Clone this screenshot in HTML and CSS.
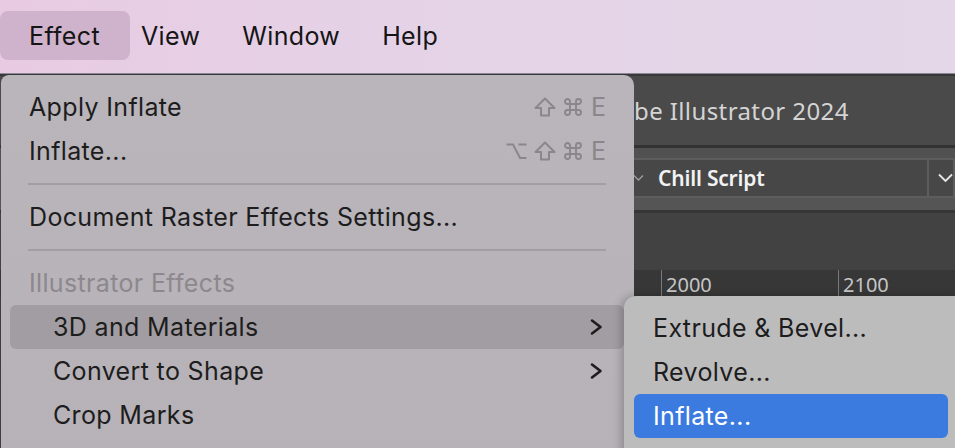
FILE: index.html
```html
<!DOCTYPE html>
<html lang="en">
<head>
<meta charset="utf-8">
<title>Effect menu</title>
<link rel="stylesheet" href="styles.css">
</head>
<body>
<div class="screen">
  <header class="menubar">
    <span class="mb-item active">Effect</span>
    <span class="mb-item">View</span>
    <span class="mb-item">Window</span>
    <span class="mb-item">Help</span>
  </header>

  <main class="app">
    <div class="titlebar"><span class="app-title">be Illustrator 2024</span></div>
    <div class="sep-dark"></div>
    <div class="band"></div>
    <div class="controlbar">
      <div class="font-field">
        <svg class="dd-small" width="11" height="8" viewBox="0 0 11 8"><polyline points="1,1.5 5.5,6 10,1.5" fill="none" stroke="#9c9c9c" stroke-width="1.4"/></svg>
        <span class="font-name">Chill Script</span>
      </div>
      <div class="style-field">
        <svg class="dd-big" width="15" height="10" viewBox="0 0 15 10"><polyline points="1,1.5 7.5,8 14,1.5" fill="none" stroke="#e6e6e6" stroke-width="1.8"/></svg>
      </div>
    </div>
    <div class="band2"></div>
    <div class="sep-dark2"></div>
    <div class="canvas-top"></div>
    <div class="ruler">
      <span class="tick"></span>
      <span class="tick"></span>
      <span class="tick"></span>
      <span class="tick">2000</span>
      <span class="tick">2100</span>
    </div>
    <div class="canvas"></div>
  </main>

  <div class="menu main-menu">
    <div class="mi">
      <span>Apply Inflate</span>
      <span class="keys">
        <svg width="22" height="20" viewBox="0 0 22 20"><polygon points="11,1.5 20.5,11 15,11 15,18.5 7,18.5 7,11 1.5,11" fill="none" stroke="#8a868b" stroke-width="2" stroke-linejoin="round"/></svg>
        <svg width="20" height="20" viewBox="0 0 20 20"><path d="M7 7V4.5A2.5 2.5 0 1 0 4.5 7H15.5A2.5 2.5 0 1 0 13 4.5V15.5A2.5 2.5 0 1 0 15.5 13H4.5A2.5 2.5 0 1 0 7 15.5Z" fill="none" stroke="#8a868b" stroke-width="1.9"/></svg>
        <span class="key-e">E</span>
      </span>
    </div>
    <div class="mi">
      <span>Inflate...</span>
      <span class="keys">
        <svg width="21" height="20" viewBox="0 0 21 20"><path d="M0.5 3.5H7L14 17H20.5M12.5 3.5H20.5" fill="none" stroke="#8a868b" stroke-width="2"/></svg>
        <svg width="22" height="20" viewBox="0 0 22 20"><polygon points="11,1.5 20.5,11 15,11 15,18.5 7,18.5 7,11 1.5,11" fill="none" stroke="#8a868b" stroke-width="2" stroke-linejoin="round"/></svg>
        <svg width="20" height="20" viewBox="0 0 20 20"><path d="M7 7V4.5A2.5 2.5 0 1 0 4.5 7H15.5A2.5 2.5 0 1 0 13 4.5V15.5A2.5 2.5 0 1 0 15.5 13H4.5A2.5 2.5 0 1 0 7 15.5Z" fill="none" stroke="#8a868b" stroke-width="1.9"/></svg>
        <span class="key-e">E</span>
      </span>
    </div>
    <div class="msep"></div>
    <div class="mi"><span>Document Raster Effects Settings...</span></div>
    <div class="msep"></div>
    <div class="mi disabled"><span>Illustrator Effects</span></div>
    <div class="mi indent hover">
      <span>3D and Materials</span>
      <svg class="chev" width="13" height="18" viewBox="0 0 13 18"><polyline points="2,2.5 10.5,9 2,15.5" fill="none" stroke="#1d1d1d" stroke-width="2.6" stroke-linecap="round" stroke-linejoin="round"/></svg>
    </div>
    <div class="mi indent">
      <span>Convert to Shape</span>
      <svg class="chev" width="13" height="18" viewBox="0 0 13 18"><polyline points="2,2.5 10.5,9 2,15.5" fill="none" stroke="#1d1d1d" stroke-width="2.6" stroke-linecap="round" stroke-linejoin="round"/></svg>
    </div>
    <div class="mi indent"><span>Crop Marks</span></div>
  </div>

  <div class="menu submenu">
    <div class="si"><span>Extrude &amp; Bevel...</span></div>
    <div class="si"><span>Revolve...</span></div>
    <div class="si sel"><span>Inflate...</span></div>
  </div>
</div>
</body>
</html>
```

FILE: styles.css
```css
* { box-sizing: border-box; margin: 0; padding: 0; }
html, body { width: 955px; height: 448px; overflow: hidden; }
body { font-family: Inter, "Noto Sans", sans-serif; background: #3c3c3c; }

.screen { position: relative; width: 955px; height: 448px; overflow: hidden; }

/* macOS menu bar */
.menubar {
  height: 74px;
  display: flex;
  align-items: center;
  padding-bottom: 2px;
  background: linear-gradient(90deg, #e8cbe3 0%, #e5d2e6 40%, #e3d7e8 100%);
  border-bottom: 1px solid #8c8996;
  font-size: 25px;
  letter-spacing: 0.35px;
  color: #151515;
}
.mb-item { height: 49px; display: flex; align-items: center; padding: 0 21px; }
.mb-item.active {
  background: #cfb2cb;
  border-radius: 8px;
  padding: 0 30px 0 29px;
  margin-right: -10px;
}

/* Illustrator window behind */
.app { display: flex; flex-direction: column; height: 374px; }
.titlebar {
  height: 71px;
  border-top: 2px solid #383838;
  background: #4a4a4a;
  display: flex;
  align-items: center;
  padding-left: 634px;
  color: #d4d4d4;
  font-family: "Noto Sans", sans-serif;
  font-size: 24px;
  letter-spacing: 0.4px;
}
.sep-dark { height: 3px; background: #333333; }
.band { height: 10px; background: #515151; }
.controlbar { height: 40px; display: flex; background: #515151; }
.font-field {
  width: 412px;
  margin-left: 520px;
  background: #474747;
  border: 2px solid #5d5d5d;
  display: flex;
  align-items: center;
  padding-left: 111px;
  gap: 14px;
}
.font-name {
  font-family: "Noto Sans", sans-serif;
  font-weight: 600;
  font-size: 21px;
  color: #f2f2f2;
  letter-spacing: -0.2px;
}
.style-field {
  flex: 1;
  background: #474747;
  border: 2px solid #5d5d5d;
  border-left: none;
  display: flex;
  align-items: center;
  padding-left: 9px;
}
.band2 { height: 12px; background: #555555; }
.sep-dark2 { height: 3px; background: #363636; }
.canvas-top { height: 57px; background: #424242; }
.ruler {
  height: 28px;
  background: #373737;
  display: flex;
  padding-left: 130px;
}
.tick {
  width: 177px;
  flex: none;
  border-left: 1px solid #7a7a7a;
  padding-left: 4px;
  font-family: "Noto Sans", sans-serif;
  font-size: 20px;
  line-height: 30px;
  color: #c6c6c6;
}
.canvas { flex: 1; background: #3d3d3d; }

/* Dropdown menus (overlays) */
.menu { position: absolute; font-size: 25px; letter-spacing: 0.35px; color: #1d1d1d; }
.main-menu {
  left: 1px;
  top: 75px;
  width: 633px;
  height: 380px;
  padding-top: 10px;
  background: linear-gradient(180deg, #b9b5ba 0%, #b6b2b7 100%);
  border-radius: 8px 10px 0 0;
}
.mi {
  height: 44px;
  margin: 0 10px 0 9px;
  padding: 0 18px 0 19px;
  display: flex;
  align-items: center;
  justify-content: space-between;
  border-radius: 6px;
}
.mi.indent { padding-left: 43px; }
.mi.disabled { color: #8c888d; }
.mi.hover { background: #a29da2; }
.chev { margin-right: 3px; }
.keys { display: flex; align-items: center; gap: 7px; color: #8a868b; letter-spacing: 0; }
.key-e { margin-left: 1px; }
.msep { height: 2px; background: #a29ea3; margin: 10px 28px 10px 27px; }

.submenu {
  left: 624px;
  top: 296px;
  width: 334px;
  height: 170px;
  padding-top: 10px;
  background: #bdbcbd;
  border-radius: 12px 0 0 0;
  box-shadow: -3px 0 9px rgba(0, 0, 0, 0.22);
}
.si {
  height: 44px;
  margin: 0 10px;
  padding-left: 19px;
  display: flex;
  align-items: center;
  border-radius: 6px;
}
.si.sel { background: #3b7be0; color: #ffffff; }
```
